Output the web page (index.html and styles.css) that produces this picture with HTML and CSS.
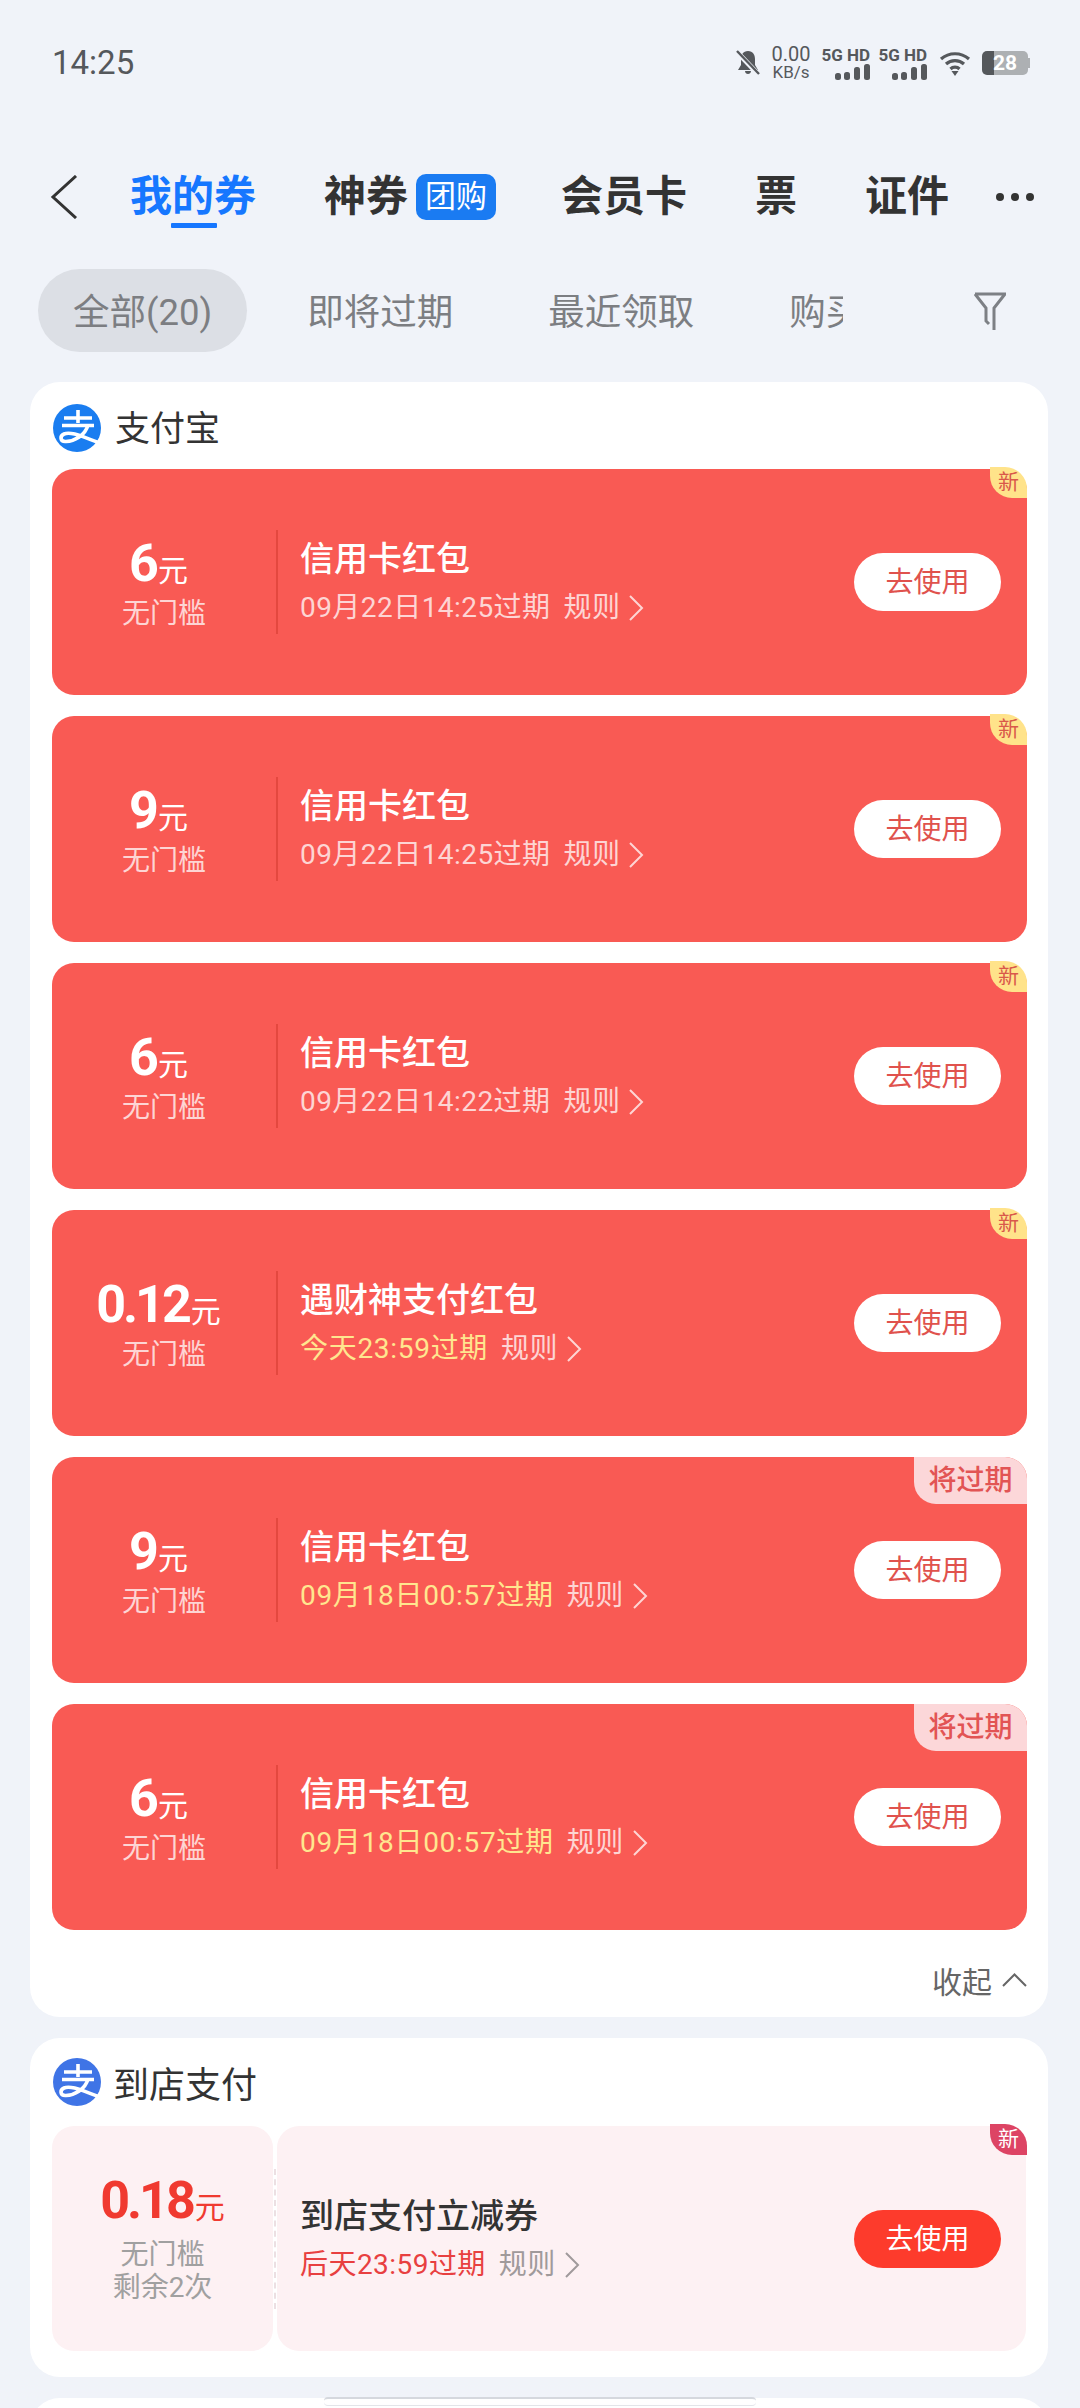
FILE: index.html
```html
<!DOCTYPE html>
<html>
  <head>
    <meta charset='utf-8'>
    <title>我的券</title>
    <link rel="stylesheet" href="styles.css">
  </head>
  <body>
    <svg class='defs' width='0' height='0'>
      <symbol id='chev_right' viewBox='0 0 16 26'>
        <path d='M2 1 L14 13 L2 25' fill='none' stroke='currentColor' stroke-width='2'/>
      </symbol>
      <symbol id='zhi_mark' viewBox='0 0 48 48'>
        <path d='M11 14 H39 M25 6 V19 M9 21.5 H41' fill='none' stroke='#fff' stroke-width='3.6'/>
        <path d='M35 21 C32 32 21 37 13 37.5 C7 38 6.5 32 11 30 C18 27 30 33 47 39' fill='none' stroke='#fff' stroke-width='3.6'/>
      </symbol>
    </svg>

    <div id='status_bar'>
      <span class='time'>14:25</span>
      <div class='status_icons'>
        <svg class='bell' viewBox='0 0 24 26'>
          <path d='M12 1 C7 1 5 5 5 9 V15 L2 20 H22 L19 15 V9 C19 5 17 1 12 1 Z M9 21 H15 C15 25 9 25 9 21 Z' fill='#55585c'/>
          <path d='M1 2 L23 25' stroke='#f0f3f9' stroke-width='5'/>
          <path d='M1 1 L23 24' stroke='#55585c' stroke-width='2.4'/>
        </svg>
        <div class='speed'><div class='speed_num'>0.00</div><div class='speed_unit'>KB/s</div></div>
        <div class='net'>
          <div class='net_label'>5G HD</div>
          <svg class='bars' viewBox='0 0 35 16'>
            <rect x='0' y='9' width='6' height='7' rx='2.5'/><rect x='9' y='8' width='6' height='8' rx='2.5'/><rect x='19' y='3' width='6' height='13' rx='2.5'/><rect x='29' y='0' width='6' height='16' rx='2.5'/>
          </svg>
        </div>
        <div class='net'>
          <div class='net_label'>5G HD</div>
          <svg class='bars' viewBox='0 0 35 16'>
            <rect x='0' y='9' width='6' height='7' rx='2.5'/><rect x='9' y='8' width='6' height='8' rx='2.5'/><rect x='19' y='3' width='6' height='13' rx='2.5'/><rect x='29' y='0' width='6' height='16' rx='2.5'/>
          </svg>
        </div>
        <svg class='wifi' viewBox='0 0 32 25'>
          <path d='M2 8 C10 1 22 1 30 8 M7 13 C12 8.500 20 8.500 25 13 M11.500 18 C14 15.500 18 15.500 20.500 18' fill='none' stroke='#55585c' stroke-width='3.2'/>
          <path d='M12.500 20 H19.500 L16 25 Z' fill='#55585c'/>
        </svg>
        <div class='battery'>28</div>
      </div>
    </div>

    <div id='nav'>
      <svg class='back' viewBox='0 0 28 44'>
        <path d='M26 1 L3 22 L26 43' fill='none' stroke='#333' stroke-width='3'/>
      </svg>
      <div class='tabs'>
        <div class='tab active'>我的券</div>
        <div class='tab'>神券<span class='tuan'>团购</span></div>
        <div class='tab'>会员卡</div>
        <div class='tab'>票</div>
        <div class='tab'>证件</div>
      </div>
      <div class='more'><i></i><i></i><i></i></div>
    </div>

    <div id='filters'>
      <div class='filter_list'>
        <div class='filter selected'>全部(20)</div>
        <div class='filter'>即将过期</div>
        <div class='filter'>最近领取</div>
        <div class='filter'>购买</div>
      </div>
      <svg class='funnel' viewBox='0 0 32 38'>
        <path d='M1 2 H31 L20 16 V38 M1 2 L12 16 V29 L15 32' fill='none' stroke='#7d8085' stroke-width='3'/>
      </svg>
    </div>

    <div class='card'>
      <div class='card_head'>
        <svg class='logo' viewBox='0 0 48 48'><circle cx='24' cy='24' r='24' fill='#1a7df0'/><use href='#zhi_mark'/></svg>
        <span class='card_title'>支付宝</span>
      </div>
      <div class='coupons'>
        <div class='coupon'>
          <div class='left'><div class='amount'><b>6</b>元</div><div class='sub'>无门槛</div></div>
          <div class='divider'></div>
          <div class='info'>
            <div class='name'>信用卡红包</div>
            <div class='expire'><span>09月22日14:25过期</span><span class='rule'>规则</span><svg class='chev'><use href='#chev_right'/></svg></div>
          </div>
          <div class='use_btn'>去使用</div>
          <div class='tag tag_new'>新</div>
        </div>
        <div class='coupon'>
          <div class='left'><div class='amount'><b>9</b>元</div><div class='sub'>无门槛</div></div>
          <div class='divider'></div>
          <div class='info'>
            <div class='name'>信用卡红包</div>
            <div class='expire'><span>09月22日14:25过期</span><span class='rule'>规则</span><svg class='chev'><use href='#chev_right'/></svg></div>
          </div>
          <div class='use_btn'>去使用</div>
          <div class='tag tag_new'>新</div>
        </div>
        <div class='coupon'>
          <div class='left'><div class='amount'><b>6</b>元</div><div class='sub'>无门槛</div></div>
          <div class='divider'></div>
          <div class='info'>
            <div class='name'>信用卡红包</div>
            <div class='expire'><span>09月22日14:22过期</span><span class='rule'>规则</span><svg class='chev'><use href='#chev_right'/></svg></div>
          </div>
          <div class='use_btn'>去使用</div>
          <div class='tag tag_new'>新</div>
        </div>
        <div class='coupon'>
          <div class='left'><div class='amount'><b>0.12</b>元</div><div class='sub'>无门槛</div></div>
          <div class='divider'></div>
          <div class='info'>
            <div class='name'>遇财神支付红包</div>
            <div class='expire'><span class='soon'>今天23:59过期</span><span class='rule'>规则</span><svg class='chev'><use href='#chev_right'/></svg></div>
          </div>
          <div class='use_btn'>去使用</div>
          <div class='tag tag_new'>新</div>
        </div>
        <div class='coupon'>
          <div class='left'><div class='amount'><b>9</b>元</div><div class='sub'>无门槛</div></div>
          <div class='divider'></div>
          <div class='info'>
            <div class='name'>信用卡红包</div>
            <div class='expire'><span class='soon'>09月18日00:57过期</span><span class='rule'>规则</span><svg class='chev'><use href='#chev_right'/></svg></div>
          </div>
          <div class='use_btn'>去使用</div>
          <div class='tag tag_expiring'>将过期</div>
        </div>
        <div class='coupon'>
          <div class='left'><div class='amount'><b>6</b>元</div><div class='sub'>无门槛</div></div>
          <div class='divider'></div>
          <div class='info'>
            <div class='name'>信用卡红包</div>
            <div class='expire'><span class='soon'>09月18日00:57过期</span><span class='rule'>规则</span><svg class='chev'><use href='#chev_right'/></svg></div>
          </div>
          <div class='use_btn'>去使用</div>
          <div class='tag tag_expiring'>将过期</div>
        </div>
      </div>
      <div class='collapse'>收起
        <svg class='chev_up' viewBox='0 0 25 14'><path d='M1 13 L12.500 1.500 L24 13' fill='none' stroke='#666' stroke-width='2'/></svg>
      </div>
    </div>

    <div class='card card_store'>
      <div class='card_head'>
        <svg class='logo logo_store' viewBox='0 0 48 48'><circle cx='24' cy='24' r='24' fill='#3f74e6'/><use href='#zhi_mark'/></svg>
        <span class='card_title'>到店支付</span>
      </div>
      <div class='coupon store'>
        <div class='left'>
          <div class='amount'><b>0.18</b>元</div>
          <div class='sub'>无门槛</div>
          <div class='sub'>剩余2次</div>
        </div>
        <div class='divider'></div>
        <div class='store_body'>
          <div class='info'>
            <div class='name'>到店支付立减券</div>
            <div class='expire'><span class='soon'>后天23:59过期</span><span class='rule'>规则</span><svg class='chev'><use href='#chev_right'/></svg></div>
          </div>
          <div class='use_btn'>去使用</div>
        </div>
        <div class='tag tag_new'>新</div>
      </div>
    </div>

    <div class='card card_next'></div>
    <div class='home_bar'></div>
  </body>
</html>
```

FILE: styles.css
```css
body {
  margin: 0;
  height: 2408px;
  overflow: hidden;
  position: relative;
  background: #f0f3f9;
  font-family: Roboto, "Noto Sans CJK SC", sans-serif;
  color: #333;
}

.defs {
  position: absolute;
}

/* status bar */
#status_bar {
  height: 124px;
  padding: 0 50px 2px 52px;
  display: flex;
  align-items: center;
  justify-content: space-between;
  color: #55585c;
}

.time {
  font-size: 33px;
}

.status_icons {
  display: flex;
  align-items: center;
  margin-top: 2px;
}

.bell {
  width: 24px;
  height: 26px;
  margin-right: 11px;
}

.speed {
  width: 40px;
  margin-right: 11px;
  text-align: center;
}

.speed_num {
  font-size: 20px;
  line-height: 18px;
}

.speed_unit {
  font-size: 17px;
  line-height: 18px;
}

.net {
  width: 48px;
  margin-right: 9px;
  display: flex;
  flex-direction: column;
  align-items: flex-end;
}

.net_label {
  font-size: 17px;
  font-weight: bold;
  line-height: 17px;
  white-space: nowrap;
}

.bars {
  width: 35px;
  height: 16px;
  fill: #55585c;
}

.wifi {
  width: 32px;
  height: 25px;
  margin: 0 11px 0 3px;
}

.battery {
  width: 46px;
  height: 24px;
  position: relative;
  margin-right: 2px;
  border-radius: 5px;
  background: linear-gradient(90deg, #55585c 12px, #adb0b3 12px);
  color: #fff;
  font-size: 21px;
  font-weight: bold;
  line-height: 24px;
  text-align: center;
}

.battery::after {
  content: '';
  position: absolute;
  right: -2px;
  top: 7px;
  width: 2px;
  height: 10px;
  background: #adb0b3;
}

/* top tabs */
#nav {
  height: 138px;
  padding: 2px 46px 0 50px;
  display: flex;
  align-items: center;
}

.back {
  width: 28px;
  height: 44px;
  margin-right: 52px;
}

.tabs {
  display: flex;
  align-items: center;
  gap: 68px;
}

.tab {
  position: relative;
  display: flex;
  align-items: center;
  font-size: 42px;
  font-weight: bold;
  line-height: 60px;
}

.tab.active {
  color: #1677ff;
}

.tab.active::after {
  content: '';
  position: absolute;
  left: 41px;
  bottom: -1px;
  width: 46px;
  height: 5px;
  border-radius: 1px;
  background: #1677ff;
}

.tuan {
  width: 80px;
  height: 46px;
  margin: 0 -3px 0 8px;
  border-radius: 10px;
  background: #1a7bf2;
  color: #fff;
  font-size: 31px;
  font-weight: normal;
  line-height: 46px;
  text-align: center;
}

.more {
  margin-left: auto;
  display: flex;
  gap: 7px;
}

.more i {
  width: 8px;
  height: 8px;
  border-radius: 50%;
  background: #333;
}

/* filter row */
#filters {
  margin-top: 3px;
  padding-left: 38px;
  display: flex;
  align-items: center;
}

.filter_list {
  width: 805px;
  overflow: hidden;
  display: flex;
  gap: 25px;
}

.filter {
  flex: none;
  height: 83px;
  padding: 0 35px;
  border-radius: 42px;
  color: #7c7e82;
  font-size: 36.5px;
  line-height: 88px;
}

.filter.selected {
  background: #dcdfe5;
}

.funnel {
  width: 32px;
  height: 38px;
  margin-left: 131px;
}

/* cards */
.card {
  margin: 30px 32px 0 30px;
  padding: 0 21px 0 22px;
  border-radius: 30px;
  background: #fff;
}

.card_head {
  height: 82px;
  padding-top: 5px;
  display: flex;
  align-items: center;
}

.logo {
  width: 48px;
  height: 48px;
  margin: 0 14px 0 1px;
}

.card_title {
  margin-bottom: 5px;
  font-size: 35px;
}

.coupons {
  display: flex;
  flex-direction: column;
  gap: 21px;
}

.coupon {
  position: relative;
  height: 226px;
  display: flex;
  align-items: center;
  border-radius: 22px;
  background: #f95a54;
  color: #fff;
}

.left {
  flex: none;
  width: 224px;
  padding-top: 3px;
  text-align: center;
}

.amount {
  padding-right: 11px;
  font-size: 30px;
  line-height: 60px;
}

.amount b {
  font-size: 52px;
  letter-spacing: -3px;
  margin-right: 2px;
}

.sub {
  margin-top: -7px;
  color: rgba(255, 255, 255, 0.75);
  font-size: 28px;
  line-height: 40px;
}

.divider {
  flex: none;
  width: 2px;
  height: 104px;
  background: #e4483f;
}

.info {
  flex: 1;
  padding-left: 22px;
}

.name {
  padding-top: 2px;
  font-size: 34px;
  font-weight: 500;
  line-height: 50px;
}

.expire {
  display: flex;
  align-items: center;
  color: rgba(255, 255, 255, 0.75);
  font-size: 28px;
  letter-spacing: 0.45px;
  line-height: 48px;
}

.soon {
  color: #ffe68f;
  letter-spacing: 0.7px;
}

.rule {
  margin-left: 13px;
}

.chev {
  width: 16px;
  height: 26px;
  margin-left: 8px;
}

.use_btn {
  flex: none;
  width: 147px;
  height: 58px;
  margin-right: 26px;
  border-radius: 29px;
  background: #fff;
  color: #e0524d;
  font-size: 28px;
  line-height: 60px;
  text-align: center;
}

.tag {
  position: absolute;
  top: -2px;
  right: 0;
  text-align: center;
}

.tag_new {
  width: 37px;
  height: 31px;
  border-radius: 0 22px 0 22px;
  background: #ffe38a;
  color: #d9584a;
  font-size: 21px;
  line-height: 31px;
}

.tag_expiring {
  top: 0;
  width: 113px;
  height: 47px;
  border-radius: 0 22px 0 22px;
  background: #fcd7d9;
  color: #e25454;
  font-size: 28px;
  font-weight: 500;
  line-height: 47px;
}

.collapse {
  height: 74px;
  padding-top: 13px;
  display: flex;
  align-items: center;
  justify-content: flex-end;
  color: #666;
  font-size: 30px;
}

.chev_up {
  width: 25px;
  height: 14px;
  margin-left: 10px;
}

/* second card */
.card_store {
  margin-top: 21px;
  padding-bottom: 26px;
}

.card_store .card_head {
  height: 88px;
  padding-top: 0;
}

.logo_store {
  margin-right: 12px;
}

.card_store .card_title {
  margin-bottom: 0;
  font-size: 36px;
}

.store {
  height: 225px;
  background: none;
  color: #333;
}

.store .left {
  width: 221px;
  height: 225px;
  padding: 0 0 3px;
  box-sizing: border-box;
  display: flex;
  flex-direction: column;
  justify-content: center;
  border-radius: 22px;
  background: #fdf1f3;
}

.store .amount {
  padding-right: 0;
  color: #f03a30;
}

.store .sub {
  margin-top: 0;
  color: #a0a0a0;
  line-height: 33px;
}

.store .divider {
  width: 0;
  height: 140px;
  margin: 0 1px;
  border-left: 2px dashed #ece0e3;
  background: none;
}

.store_body {
  flex: 1;
  height: 225px;
  margin-right: 1px;
  display: flex;
  align-items: center;
  border-radius: 22px;
  background: #fdf1f3;
}

.store .info {
  padding-left: 23px;
}

.store .expire {
  color: #a09a9b;
}

.store .soon {
  color: #e84040;
  letter-spacing: 0.45px;
}

.store .use_btn {
  margin-right: 25px;
  background: #fd3b2c;
  color: #fff;
}

.store .tag_new {
  background: #dd4464;
  color: #fff;
}

.card_next {
  height: 60px;
  margin-top: 21px;
}

.home_bar {
  position: absolute;
  left: 324px;
  top: 2397px;
  width: 432px;
  height: 9px;
  box-sizing: border-box;
  border-top: 2px solid #d5d8de;
  border-bottom: 1px solid #e3e5ea;
  border-radius: 4px;
  background: #fff;
}
```
